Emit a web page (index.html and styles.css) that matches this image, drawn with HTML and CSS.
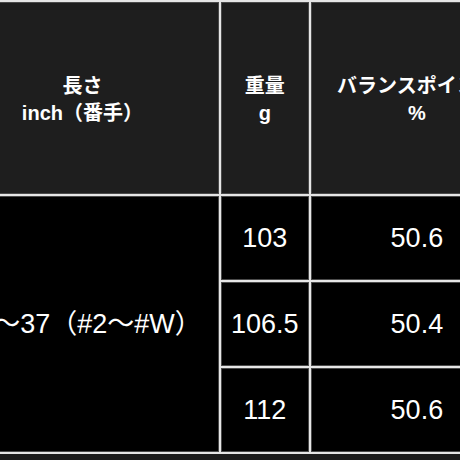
FILE: index.html
```html
<!DOCTYPE html>
<html lang="ja">
<head>
<meta charset="utf-8">
<link rel="stylesheet" href="styles.css">
</head>
<body>
<div class="frame">
  <table class="spec">
    <colgroup>
      <col class="c-len">
      <col class="c-wt">
      <col class="c-bal">
    </colgroup>
    <thead>
      <tr class="head-row">
        <th>長さ<br>inch（番手）</th>
        <th>重量<br>g</th>
        <th>バランスポイント<br>%</th>
      </tr>
    </thead>
    <tbody>
      <tr class="body-row">
        <td rowspan="3" class="len">35〜37（#2〜#W）</td>
        <td>103</td>
        <td>50.6</td>
      </tr>
      <tr class="body-row">
        <td>106.5</td>
        <td>50.4</td>
      </tr>
      <tr class="body-row">
        <td>112</td>
        <td>50.6</td>
      </tr>
    </tbody>
  </table>
</div>
</body>
</html>
```
FILE: styles.css
```css
html, body {
  margin: 0;
  padding: 0;
  background: #1c1c1c;
}

.frame {
  width: 460px;
  height: 460px;
  overflow: hidden;
}

.spec {
  table-layout: fixed;
  border-collapse: separate;
  border-spacing: 2px;
  background: #e6e6e6;
  margin-left: -56px;
  width: 581px;
  color: #ffffff;
}

.c-len { width: 270px; }
.c-wt { width: 87px; }
.c-bal { width: 210px; }

.head-row { height: 192px; }
.body-row { height: 84px; }

.spec th,
.spec td {
  padding: 0;
  border: 1px solid #4a4a4a;
  text-align: center;
  vertical-align: middle;
  white-space: nowrap;
}

.spec th {
  background: #1e1e1e;
  padding-top: 4px;
  font: bold 20px/27px "Liberation Sans", "Noto Sans CJK JP", sans-serif;
}

.spec td {
  background: #000000;
  font: 27px/32px "Liberation Sans", "Noto Sans CJK JP", sans-serif;
}
```
